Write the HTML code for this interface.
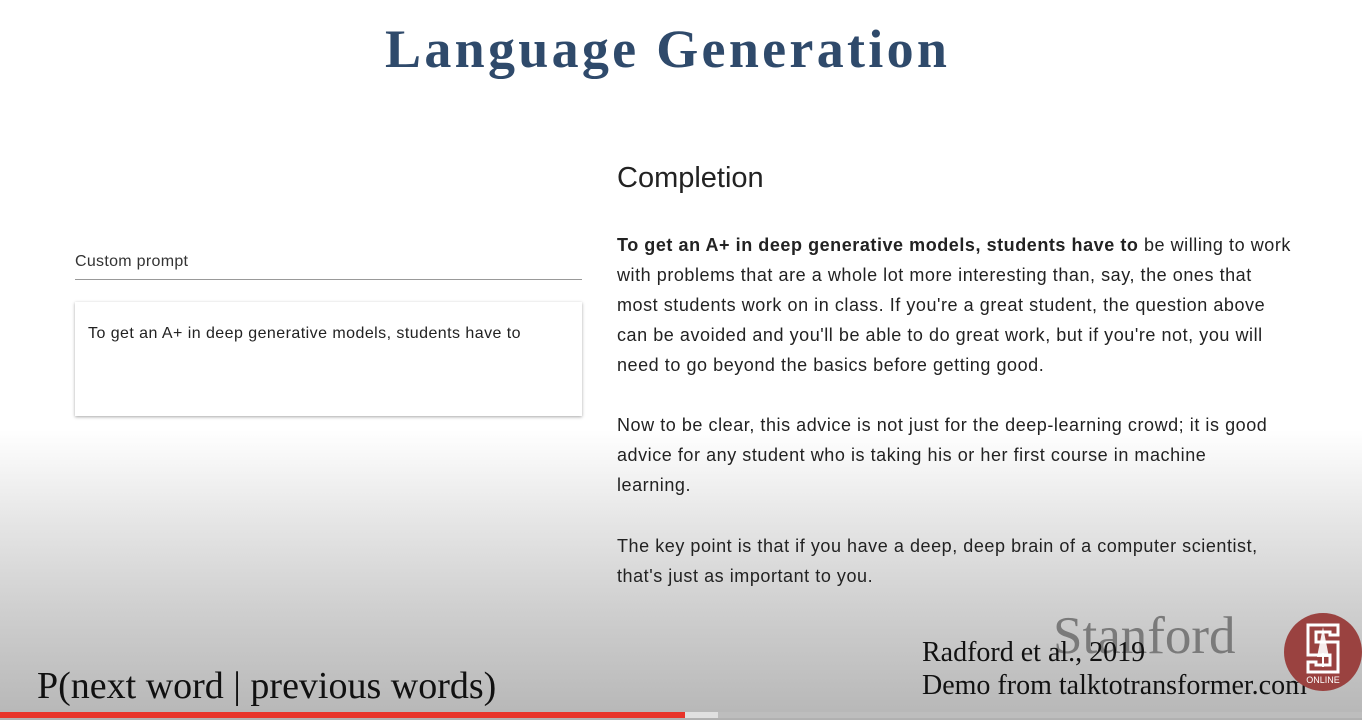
<!DOCTYPE html>
<html><head><style>
body{margin:0;width:1362px;height:720px;overflow:hidden;position:relative;font-family:"Liberation Sans",sans-serif;
background:linear-gradient(to bottom,#fff 0,#fff 430px,#e6e6e6 520px,#cfcfcf 610px,#b8b8b8 712px,#b0b0b0 720px);}
.a{position:absolute;white-space:nowrap}
.t{font-family:"Liberation Serif",serif;font-weight:bold;color:#2f4a6b;font-size:54px;left:385px;top:18px;letter-spacing:3.3px}
.p{font-size:18px;color:#222;line-height:30px;left:617px;letter-spacing:0.55px}
.s{font-family:"Liberation Serif",serif;color:#111}
</style></head><body>
<div class="a t">Language Generation</div>
<div class="a" style="left:75px;top:253px;font-size:16px;color:#333;letter-spacing:0.3px">Custom prompt</div>
<div class="a" style="left:75px;top:279px;width:507px;border-top:1.5px solid #999"></div>
<div class="a" style="left:75px;top:302px;width:507px;height:114px;background:#fff;box-shadow:0 1px 3px rgba(0,0,0,.35)"></div>
<div class="a" style="left:88px;top:325px;font-size:16px;color:#222;letter-spacing:0.45px">To get an A+ in deep generative models, students have to</div>
<div class="a" style="left:617px;top:162px;font-size:29px;color:#222">Completion</div>
<div class="a p" style="top:230px"><b>To get an A+ in deep generative models, students have to</b> be willing to work<br>with problems that are a whole lot more interesting than, say, the ones that<br>most students work on in class. If you're a great student, the question above<br>can be avoided and you'll be able to do great work, but if you're not, you will<br>need to go beyond the basics before getting good.</div>
<div class="a p" style="top:410px">Now to be clear, this advice is not just for the deep-learning crowd; it is good<br>advice for any student who is taking his or her first course in machine<br>learning.</div>
<div class="a p" style="top:531px">The key point is that if you have a deep, deep brain of a computer scientist,<br>that's just as important to you.</div>
<div class="a s" style="left:1053px;top:606px;font-size:53px;color:#7a7a7a">Stanford</div>
<div class="a s" style="left:922px;top:637px;font-size:28px">Radford et al., 2019</div>
<div class="a s" style="left:922px;top:670px;font-size:28px">Demo from talktotransformer.com</div>
<div class="a s" style="left:37px;top:664px;font-size:38px">P(next word | previous words)</div>
<svg class="a" style="left:1284px;top:613px" width="78" height="78"><circle cx="39" cy="39" r="39" fill="#9a4240"/>
<path d="M24 12h30v10h-8v-3H32v10h22v30H24V49h8v3h14V42H24z" fill="none" stroke="#fff" stroke-width="3"/>
<path d="M39 14l-6 30h12z" fill="#fff" opacity=".9"/><rect x="38" y="40" width="2" height="14" fill="#fff"/>
<text x="39" y="70" font-size="9" fill="#fff" text-anchor="middle" font-family="Liberation Sans">ONLINE</text></svg>
<div class="a" style="left:0;top:712px;width:685px;height:6px;background:#e8342a"></div>
<div class="a" style="left:685px;top:712px;width:33px;height:6px;background:#e0e0e0"></div>
<div class="a" style="left:718px;top:712px;width:644px;height:6px;background:#bdbdbd"></div>
</body></html>
